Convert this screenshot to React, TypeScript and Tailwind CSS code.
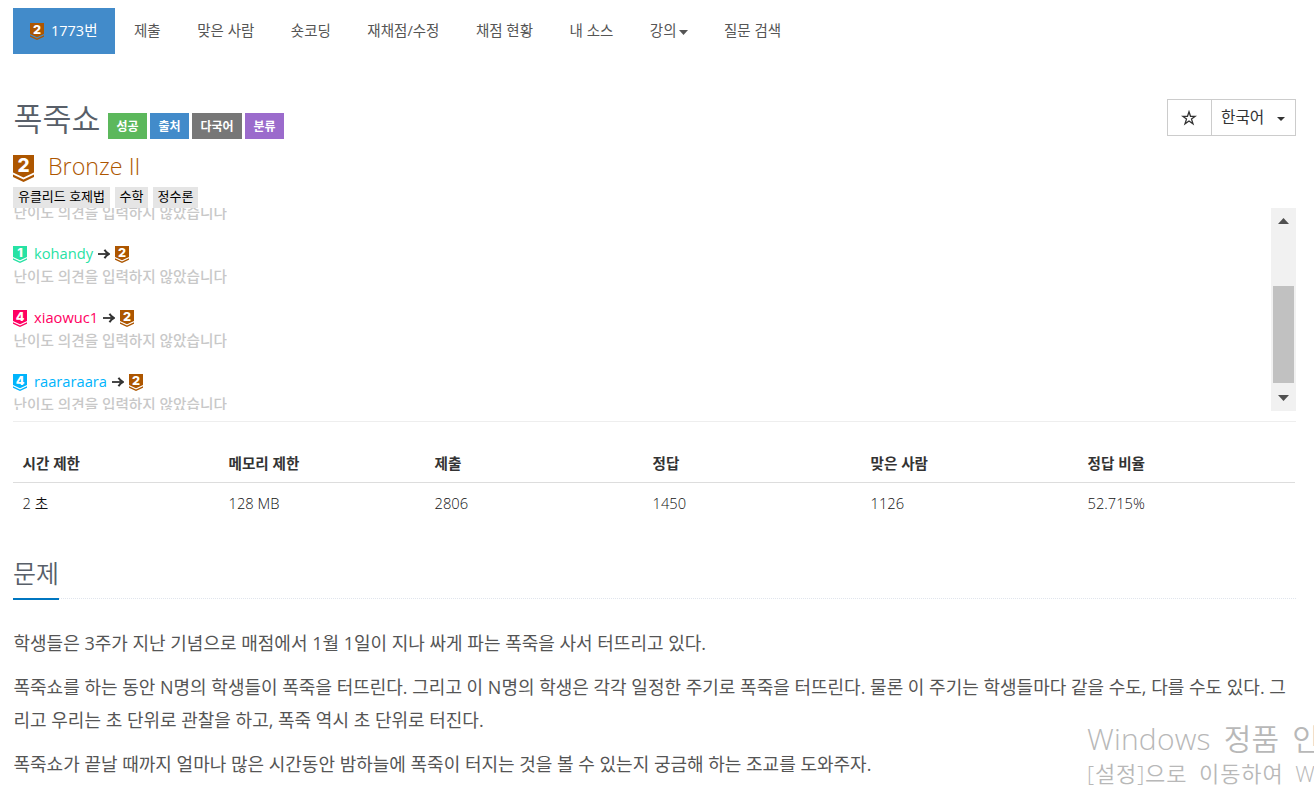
interface Tier {
  level: string
  color: string
}

interface Vote {
  name: string
  tier: Tier
}

const bronze: Tier = { level: '2', color: '#ad5600' }

const votes: Vote[] = [
  { name: 'kohandy', tier: { level: '1', color: '#27e2a4' } },
  { name: 'xiaowuc1', tier: { level: '4', color: '#ff0062' } },
  { name: 'raararaara', tier: { level: '4', color: '#00b4fc' } },
]

const menu = ['제출', '맞은 사람', '숏코딩', '재채점/수정', '채점 현황', '내 소스', '강의', '질문 검색']

const labels = [
  { text: '성공', className: 'w-[39px] bg-[#5cb85c]' },
  { text: '출처', className: 'w-[39px] bg-[#428bca]' },
  { text: '다국어', className: 'w-[50px] bg-[#777777]' },
  { text: '분류', className: 'w-[39px] bg-[#9b6bcc]' },
]

const tags = [
  { text: '유클리드 호제법', className: 'w-[97px]' },
  { text: '수학', className: 'w-[33px]' },
  { text: '정수론', className: 'w-[45px]' },
]

const limits = [
  { title: '시간 제한', value: '2 초' },
  { title: '메모리 제한', value: '128 MB' },
  { title: '제출', value: '2806' },
  { title: '정답', value: '1450' },
  { title: '맞은 사람', value: '1126' },
  { title: '정답 비율', value: '52.715%' },
]

function TierBadge({ tier, className }: { tier: Tier; className: string }) {
  return (
    <svg viewBox="0 0 21 27" preserveAspectRatio="none" className={className}>
      <path d="M0 0H21V17.5L10.5 22.5L0 17.5Z" fill={tier.color} />
      <path d="M0 19.5L10.5 24.5L21 19.5V22L10.5 27L0 22Z" fill={tier.color} />
      <text
        x="10.5"
        y="17"
        textAnchor="middle"
        fill="#fff"
        fontFamily="Inter, sans-serif"
        fontSize="19"
        fontWeight="800"
      >
        {tier.level}
      </text>
    </svg>
  )
}

function Caret({ className }: { className: string }) {
  return (
    <svg viewBox="0 0 8 4" preserveAspectRatio="none" className={className}>
      <path d="M0 0H8L4 4Z" fill="currentColor" />
    </svg>
  )
}

function NoComment() {
  return (
    <p className="h-[22px] pl-[0.5px] text-[14.65px] leading-[22px] font-medium text-[#c8c8c8]">
      난이도 의견을 입력하지 않았습니다
    </p>
  )
}

export default function App() {
  return (
    <div className="relative h-[789px] w-[1314px] overflow-hidden bg-white pt-2 pr-[18px] pl-[13px] font-['Open_Sans','Noto_Sans_CJK_KR',sans-serif] text-[#333333]">
      <nav className="flex h-[46px] items-center text-[14.5px] text-[#555555]">
        <a className="mr-[19px] flex h-full w-[102px] items-center bg-[#428bca] pl-[17px] text-white">
          <TierBadge tier={bronze} className="mt-px mr-[7px] h-[17px] w-[14px]" />
          <span>1773번</span>
        </a>
        {menu.map((item) => (
          <a key={item} className="mr-[36.5px] flex items-center whitespace-nowrap">
            {item}
            {item === '강의' && <Caret className="mt-[3px] ml-[2px] h-[5px] w-[9px]" />}
          </a>
        ))}
      </nav>

      <header className="mt-[45px] flex h-[40px] items-start justify-between">
        <div className="flex items-end">
          <h1 className="w-[95px] pl-[0.5px] text-[31.5px] leading-[40px] font-[350] whitespace-nowrap text-[#585f69]">
            폭죽쇼
          </h1>
          <div className="flex gap-[3px]">
            {labels.map((l) => (
              <span
                key={l.text}
                className={`flex h-[26px] items-center justify-center pt-[2px] text-[12px] font-bold text-white ${l.className}`}
              >
                {l.text}
              </span>
            ))}
          </div>
        </div>
        <div className="flex h-[37px] border border-[#cccccc]">
          <button className="flex w-[44px] items-center justify-center border-r border-[#cccccc] pr-[2px]">
            <svg viewBox="0 0 16 16" className="h-4 w-4">
              <path
                d="M8 1.8L9.5 6.3H14.3L10.5 9.1L12 13.8L8 11L4 13.8L5.5 9.1L1.7 6.3H6.5Z"
                fill="none"
                stroke="#333"
                strokeWidth="1.3"
              />
            </svg>
          </button>
          <button className="flex w-[83px] items-center pl-[9px] text-[15.7px]">
            한국어
            <Caret className="mt-[3px] ml-[13px] h-1 w-2" />
          </button>
        </div>
      </header>

      <div className="mt-[14px] flex h-[28px] items-start">
        <TierBadge tier={bronze} className="mt-[2px] h-[27px] w-[21px]" />
        <span className="-mt-px ml-[14px] text-[23.3px] leading-[28px] font-[350] text-[#ad5600]">Bronze II</span>
      </div>

      <div className="mt-[6px] flex h-[21px] gap-[5px]">
        {tags.map((t) => (
          <span
            key={t.text}
            className={`flex items-center justify-center bg-[#e5e5e5] pb-[2px] text-[13px] leading-[19px] whitespace-nowrap text-black ${t.className}`}
          >
            {t.text}
          </span>
        ))}
      </div>

      <div className="flex h-[203px] justify-between overflow-hidden">
        <div className="-mt-[7px] h-[209px] overflow-hidden">
          <NoComment />
          {votes.map((v) => (
            <div key={v.name} className="mt-5">
              <div className="flex h-[22px] items-center text-[14.7px]">
                <TierBadge tier={v.tier} className="mt-px mr-[7px] h-[17px] w-[14px]" />
                <span className="-mt-[2px]" style={{ color: v.tier.color }}>
                  {v.name}
                </span>
                <svg viewBox="0 0 12 10" className="-mt-px mx-[5px] h-[10px] w-3">
                  <path d="M0 5H10.5" fill="none" stroke="#333" strokeWidth="1.8" />
                  <path d="M6.5 0.8C7.6 2.8 8.8 4 10.8 5C8.8 6 7.6 7.2 6.5 9.2" fill="none" stroke="#333" strokeWidth="2" />
                </svg>
                <TierBadge tier={bronze} className="mt-px h-[17px] w-[14px]" />
              </div>
              <NoComment />
            </div>
          ))}
        </div>
        <div className="flex w-[25px] flex-col items-center bg-[#f1f1f1] text-[#505050]">
          <Caret className="mt-[10px] h-[6px] w-[11px] rotate-180" />
          <div className="mt-[62px] h-[97px] w-[21px] bg-[#c1c1c1]" />
          <Caret className="mt-3 h-[6px] w-[11px]" />
        </div>
      </div>

      <hr className="mt-[10px] border-[#eeeeee]" />

      <table className="mt-[22px] w-[1282px] table-fixed text-left text-[14.6px]">
        <colgroup>
          <col className="w-[206px]" />
          <col className="w-[206px]" />
          <col className="w-[218px]" />
          <col className="w-[218px]" />
          <col className="w-[217px]" />
          <col />
        </colgroup>
        <thead>
          <tr className="h-[38px] border-b border-[#dddddd]">
            {limits.map((l) => (
              <th key={l.title} className="pt-[3px] pl-[9.5px] font-bold">
                {l.title}
              </th>
            ))}
          </tr>
        </thead>
        <tbody>
          <tr className="h-[39px]">
            {limits.map((l) => (
              <td key={l.title} className="pt-[2px] pl-[9.5px] text-[14.7px] font-[350] text-[#111111]">
                {l.value}
              </td>
            ))}
          </tr>
        </tbody>
      </table>

      <div className="mt-[34px] flex h-[44px] border-b border-dotted border-[#e0e5ed]">
        <h2 className="h-[45px] w-[46px] border-b-2 border-[#0076c0] text-[25px] leading-[36px] font-[350] whitespace-nowrap text-[#585f69]">
          문제
        </h2>
      </div>

      <section className="mt-[28px] space-y-[11px] pl-[0.5px] text-[18px] leading-[33px] whitespace-nowrap text-[#555555]">
        <p>학생들은 3주가 지난 기념으로 매점에서 1월 1일이 지나 싸게 파는 폭죽을 사서 터뜨리고 있다.</p>
        <p>
          폭죽쇼를 하는 동안 N명의 학생들이 폭죽을 터뜨린다. 그리고 이 N명의 학생은 각각 일정한 주기로 폭죽을 터뜨린다. 물론 이 주기는 학생들마다 같을 수도, 다를 수도 있다. 그
          <br />
          리고 우리는 초 단위로 관찰을 하고, 폭죽 역시 초 단위로 터진다.
        </p>
        <p>폭죽쇼가 끝날 때까지 얼마나 많은 시간동안 밤하늘에 폭죽이 터지는 것을 볼 수 있는지 궁금해 하는 조교를 도와주자.</p>
      </section>

      <div className="absolute top-[720px] left-[1087px] w-[227px] overflow-hidden font-[350] whitespace-nowrap text-[#b8b8b8]">
        <p className="text-[30px] leading-[37px] tracking-[0.2px] [word-spacing:5px]">Windows 정품 인증</p>
        <p className="text-[22px] leading-[32px] tracking-[0.9px] [word-spacing:5px]">
          [설정]으로 이동하여 Windows를 정품 인증합니다.
        </p>
      </div>
    </div>
  )
}
